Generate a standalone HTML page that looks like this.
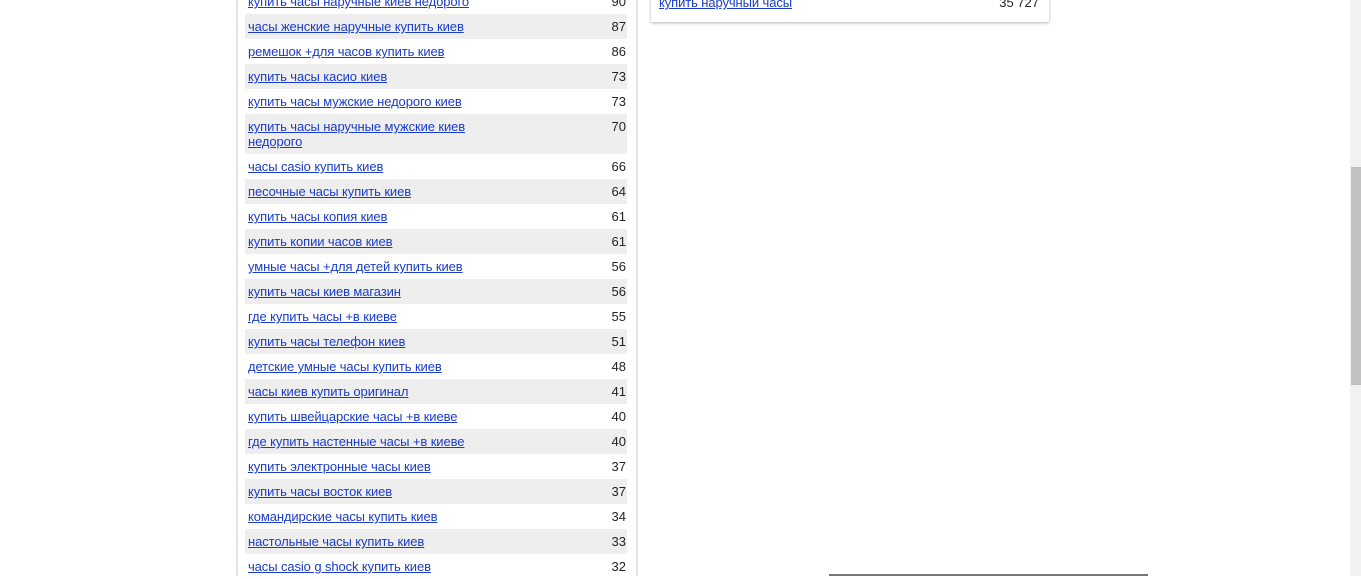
<!DOCTYPE html>
<html><head><meta charset="utf-8"><style>
html,body{margin:0;padding:0;width:1361px;height:576px;overflow:hidden;background:#fff;font-family:"Liberation Sans",Arial,sans-serif;font-size:13px;}
.panel{position:absolute;left:236px;top:-20px;width:398px;height:596px;border-left:2px solid #e3e3e3;border-right:2px solid #e3e3e3;}
.rows{position:absolute;left:245px;top:-11px;width:382px;}
.r{display:flex;justify-content:space-between;height:25px;box-sizing:border-box;padding:5px 1px 0 3px;line-height:15px;color:#222;}
.r.g{background:#eee;}
.r.t{height:40px;}
.r a{color:#1a3cc8;text-decoration:underline;width:240px;letter-spacing:-0.1px;}
.card{position:absolute;left:651px;top:-20px;width:398px;height:42px;background:#fff;box-shadow:0 1px 3px rgba(0,0,0,.3);}
.card .r{position:absolute;left:8px;right:10px;top:15px;padding:0;}
.sb{position:absolute;left:1350px;top:0;width:11px;height:576px;background:#f1f1f1;}
.th{position:absolute;left:1351px;top:167px;width:10px;height:218px;background:#c1c1c1;}
.ln{position:absolute;left:829px;top:574px;width:319px;height:2px;background:#777;}
</style></head><body>
<div class="panel"></div>
<div class="rows">
<div class="r"><a>купить часы наручные киев недорого</a><span>90</span></div>
<div class="r g"><a>часы женские наручные купить киев</a><span>87</span></div>
<div class="r"><a>ремешок +для часов купить киев</a><span>86</span></div>
<div class="r g"><a>купить часы касио киев</a><span>73</span></div>
<div class="r"><a>купить часы мужские недорого киев</a><span>73</span></div>
<div class="r g t"><a>купить часы наручные мужские киев недорого</a><span>70</span></div>
<div class="r"><a>часы casio купить киев</a><span>66</span></div>
<div class="r g"><a>песочные часы купить киев</a><span>64</span></div>
<div class="r"><a>купить часы копия киев</a><span>61</span></div>
<div class="r g"><a>купить копии часов киев</a><span>61</span></div>
<div class="r"><a>умные часы +для детей купить киев</a><span>56</span></div>
<div class="r g"><a>купить часы киев магазин</a><span>56</span></div>
<div class="r"><a>где купить часы +в киеве</a><span>55</span></div>
<div class="r g"><a>купить часы телефон киев</a><span>51</span></div>
<div class="r"><a>детские умные часы купить киев</a><span>48</span></div>
<div class="r g"><a>часы киев купить оригинал</a><span>41</span></div>
<div class="r"><a>купить швейцарские часы +в киеве</a><span>40</span></div>
<div class="r g"><a>где купить настенные часы +в киеве</a><span>40</span></div>
<div class="r"><a>купить электронные часы киев</a><span>37</span></div>
<div class="r g"><a>купить часы восток киев</a><span>37</span></div>
<div class="r"><a>командирские часы купить киев</a><span>34</span></div>
<div class="r g"><a>настольные часы купить киев</a><span>33</span></div>
<div class="r"><a>часы casio g shock купить киев</a><span>32</span></div>
</div>
<div class="card"><div class="r"><a>купить наручный часы</a><span>35 727</span></div></div>
<div class="ln"></div>
<div class="sb"></div><div class="th"></div>
</body></html>
